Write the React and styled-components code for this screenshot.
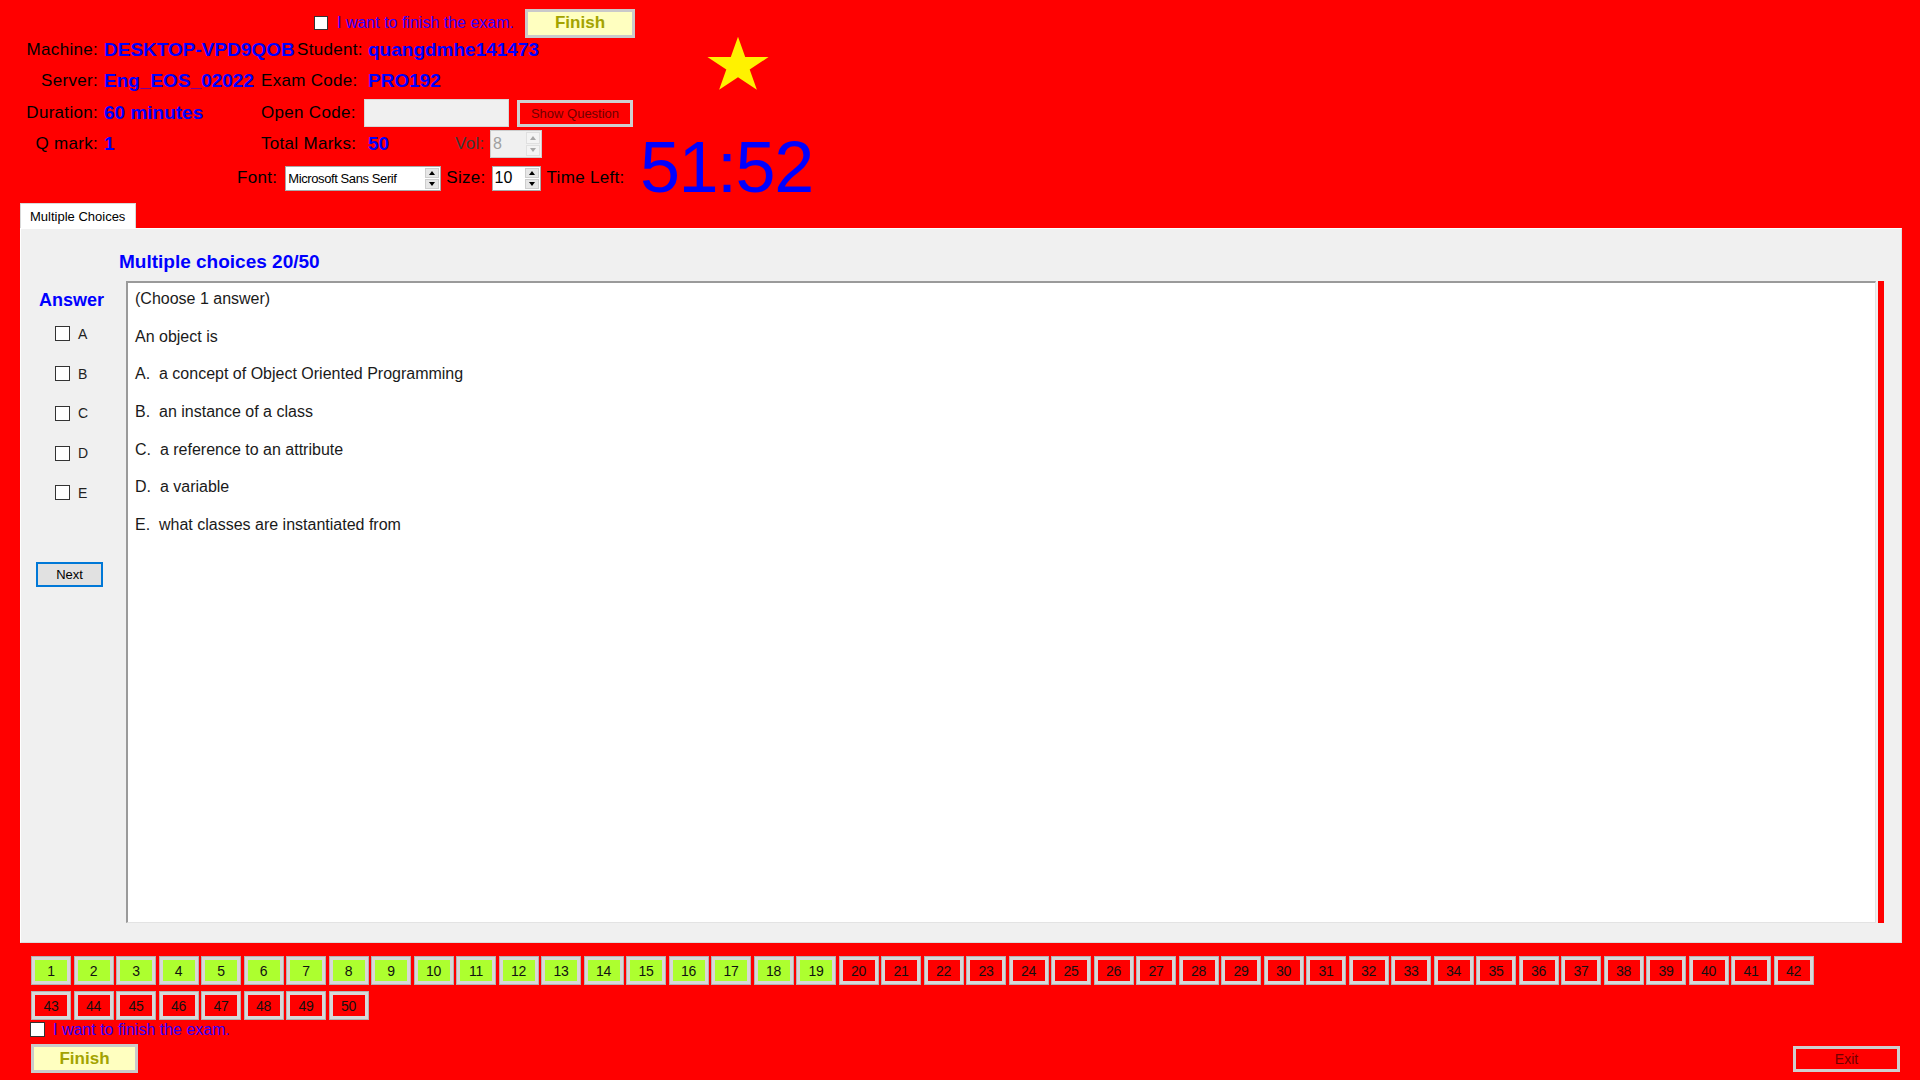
import React from 'react'
import styled, { createGlobalStyle } from 'styled-components'

const GlobalStyle = createGlobalStyle`
  html, body {
    margin: 0;
    padding: 0;
  }
  body {
    background: #ff0000;
    font-family: "Liberation Sans", Arial, sans-serif;
  }
`

const Page = styled.div`
  width: 1920px;
  height: 1080px;
  background: #ff0000;
  overflow: hidden;
`

// ---------- header ----------
const Header = styled.div`
  display: flex;
  height: 203px;
`
const InfoCol = styled.div`
  width: 640px;
  flex: none;
  padding-top: 8px;
  display: flex;
  flex-direction: column;
`
const Row = styled.div`
  display: flex;
  align-items: center;
  height: ${p => p.$h}px;
  padding-left: ${p => p.$pl || 0}px;
`
const Label = styled.span`
  flex: none;
  width: ${p => (p.$w ? p.$w + 'px' : 'auto')};
  margin-left: ${p => p.$ml || 0}px;
  text-align: right;
  white-space: nowrap;
  font-size: 17px;
  letter-spacing: 0.3px;
  color: ${p => (p.$muted ? '#3c3c3c' : '#000')};
`
const Value = styled.span`
  flex: none;
  width: ${p => (p.$w ? p.$w + 'px' : 'auto')};
  margin-left: ${p => p.$ml || 0}px;
  white-space: nowrap;
  font-weight: bold;
  font-size: 19px;
  color: #0000ff;
`
const CheckBox = styled.span`
  flex: none;
  display: inline-block;
  box-sizing: border-box;
  width: ${p => p.$size || 14}px;
  height: ${p => p.$size || 14}px;
  border: 1px solid #333;
  background: #fff;
`
const Hint = styled.span`
  flex: none;
  width: ${p => (p.$w ? p.$w + 'px' : 'auto')};
  margin-left: ${p => p.$ml || 0}px;
  font-size: 16px;
  color: #3000ff;
  white-space: nowrap;
`
const FinishButton = styled.div`
  flex: none;
  box-sizing: border-box;
  width: ${p => p.$w || 110}px;
  height: 29px;
  border: 3px solid #cacaca;
  background: #ffffc0;
  display: flex;
  align-items: center;
  justify-content: center;
  font-weight: bold;
  font-size: 17px;
  color: #a3a300;
`
const CodeInput = styled.div`
  flex: none;
  box-sizing: border-box;
  margin-left: 11px;
  width: 145px;
  height: 28px;
  background: #f0f0f0;
  border: 1px solid #d8d8d8;
`
const RedButton = styled.div`
  flex: none;
  box-sizing: border-box;
  margin-left: ${p => p.$ml || 0}px;
  width: ${p => p.$w}px;
  height: ${p => p.$h}px;
  border: 3px solid #cfcfcf;
  background: #ff0000;
  display: flex;
  align-items: center;
  justify-content: center;
  font-size: ${p => p.$fs || 13}px;
  color: #700000;
`
const Spin = styled.div`
  flex: none;
  display: flex;
  box-sizing: border-box;
  margin-left: ${p => p.$ml || 0}px;
  width: ${p => p.$w}px;
  height: ${p => p.$h}px;
  border: 1px solid ${p => (p.$disabled ? '#cccccc' : '#a9a9a9')};
  background: ${p => (p.$disabled ? '#f0f0f0' : '#fff')};
`
const SpinText = styled.span`
  flex: 1;
  padding-left: 2px;
  display: flex;
  align-items: center;
  white-space: nowrap;
  overflow: hidden;
  font-size: ${p => p.$fs}px;
  letter-spacing: ${p => p.$ls || 0}px;
  color: ${p => (p.$disabled ? '#a0a0a0' : '#000')};
`
const SpinArrows = styled.div`
  width: 16px;
  display: flex;
  flex-direction: column;
  padding: 1px;
  gap: 1px;
  box-sizing: border-box;
`
const SpinArrow = styled.div`
  flex: 1;
  display: flex;
  align-items: center;
  justify-content: center;
  background: ${p => (p.$disabled ? '#f4f4f4' : '#e6e6e6')};
  border: 1px solid ${p => (p.$disabled ? '#e0e0e0' : '#cdcdcd')};
  &::after {
    content: '';
    border-left: 3px solid transparent;
    border-right: 3px solid transparent;
    ${p => (p.$down ? 'border-top' : 'border-bottom')}: 4px solid ${p => (p.$disabled ? '#a8a8a8' : '#000')};
  }
`

const Spinner = ({ value, disabled, fs, ls, ...rest }) => (
  <Spin $disabled={disabled} {...rest}>
    <SpinText $fs={fs} $ls={ls} $disabled={disabled}>{value}</SpinText>
    <SpinArrows>
      <SpinArrow $disabled={disabled} />
      <SpinArrow $disabled={disabled} $down />
    </SpinArrows>
  </Spin>
)

const RightCol = styled.div`
  display: flex;
  flex-direction: column;
`
const StarBox = styled.svg`
  margin: 36px 0 0 58px;
  display: block;
`
const Timer = styled.div`
  margin-top: 40px;
  font-size: 72px;
  line-height: 72px;
  letter-spacing: -1.5px;
  color: #0000ff;
`

// ---------- tab panel ----------
const TabStrip = styled.div`
  display: flex;
  padding-left: 20px;
  height: 25px;
`
const Tab = styled.div`
  box-sizing: border-box;
  width: 116px;
  height: 25px;
  background: #fff;
  border: 1px solid #d9d9d9;
  border-bottom: none;
  padding-left: 9px;
  font-size: 13px;
  line-height: 25px;
  color: #000;
`
const Panel = styled.div`
  box-sizing: border-box;
  margin-left: 20px;
  width: 1882px;
  height: 715px;
  background: #f0f0f0;
  border: 1px solid #fff;
  border-right-color: #dcdcdc;
  border-bottom-color: #dcdcdc;
  padding: 0 17px 19px 0;
  display: grid;
  grid-template-columns: 105px 1fr 8px;
  grid-template-rows: 52px 1fr;
`
const Heading = styled.div`
  grid-column: 1 / -1;
  padding: 22px 0 0 98px;
  font-size: 19px;
  line-height: 22px;
  font-weight: bold;
  color: #0000ff;
`
const AnswerCol = styled.div`
  display: flex;
  flex-direction: column;
`
const AnswerTitle = styled.div`
  margin: 8px 0 0 18px;
  font-size: 18px;
  line-height: 22px;
  font-weight: bold;
  color: #0000ff;
`
const OptionList = styled.div`
  margin-top: 3px;
  padding-left: 34px;
`
const Option = styled.label`
  display: flex;
  align-items: center;
  gap: 8px;
  height: 39.75px;
  font-size: 14px;
  color: #222;
`
const NextButton = styled.div`
  box-sizing: border-box;
  margin: 49px 0 0 15px;
  width: 67px;
  height: 25px;
  border: 2px solid #0078d7;
  background: #e1e1e1;
  display: flex;
  align-items: center;
  justify-content: center;
  font-size: 13px;
  color: #000;
`
const QuestionBox = styled.div`
  background: #fff;
  border-top: 2px solid #9a9a9a;
  border-left: 2px solid #9a9a9a;
  border-right: 1px solid #e3e3e3;
  border-bottom: 1px solid #e3e3e3;
  padding: 4px 0 0 7px;
`
const Line = styled.div`
  font-size: 16px;
  line-height: 24px;
  margin-bottom: 13.67px;
  color: #1a1a1a;
  white-space: pre;
`
const RedStrip = styled.div`
  margin-left: 2px;
  background: #ff0000;
`

// ---------- footer ----------
const NumGrid = styled.div`
  margin-top: 14px;
  padding-left: 32px;
  display: grid;
  grid-template-columns: repeat(42, 38px);
  column-gap: 4.5px;
  row-gap: 8px;
`
const NumButton = styled.div`
  box-sizing: border-box;
  height: 27px;
  border: 3px solid #d8d8d8;
  outline: 1px solid #b4b4b4;
  background: ${p => (p.$done ? '#adff2f' : '#ff0000')};
  display: flex;
  align-items: center;
  justify-content: center;
  font-size: 14px;
  letter-spacing: -0.3px;
  color: #111;
`
const ConfirmRow = styled.div`
  display: flex;
  align-items: center;
  gap: 8px;
  margin-top: 3px;
  padding-left: 30px;
  height: 15px;
`
const FooterBar = styled.div`
  display: flex;
  align-items: center;
  justify-content: space-between;
  margin-top: 7px;
  padding: 0 20px 0 31px;
  height: 29px;
`

const options = ['A', 'B', 'C', 'D', 'E']
const lines = [
  '(Choose 1 answer)',
  'An object is',
  'A.  a concept of Object Oriented Programming',
  'B.  an instance of a class',
  'C.  a reference to an attribute',
  'D.  a variable',
  'E.  what classes are instantiated from',
]
const numbers = Array.from({ length: 50 }, (_, i) => i + 1)

export default function App() {
  return (
    <Page>
      <GlobalStyle />
      <Header>
        <InfoCol>
          <Row $h={30} $pl={314}>
            <CheckBox />
            <Hint $ml={9} $w={188}>I want to finish the exam.</Hint>
            <FinishButton>Finish</FinishButton>
          </Row>
          <Row $h={24}>
            <Label $w={98}>Machine:</Label>
            <Value $ml={6} $w={193}>DESKTOP-VPD9QOB</Value>
            <Label $w={64}>Student:</Label>
            <Value $ml={7}>quangdmhe141473</Value>
          </Row>
          <Row $h={37}>
            <Label $w={98}>Server:</Label>
            <Value $ml={6} $w={157}>Eng_EOS_02022</Value>
            <Label $w={92}>Exam Code:</Label>
            <Value $ml={15}>PRO192</Value>
          </Row>
          <Row $h={28}>
            <Label $w={98}>Duration:</Label>
            <Value $ml={6} $w={157}>60 minutes</Value>
            <Label $w={92}>Open Code:</Label>
            <CodeInput />
            <RedButton $ml={8} $w={116} $h={27}>Show Question</RedButton>
          </Row>
          <Row $h={34}>
            <Label $w={98}>Q mark:</Label>
            <Value $ml={6} $w={157}>1</Value>
            <Label $w={92}>Total Marks:</Label>
            <Value $ml={15} $w={87}>50</Value>
            <Label $w={28} $muted>Vol:</Label>
            <Spinner $ml={7} $w={52} $h={28} value="8" fs={16} disabled />
          </Row>
          <Row $h={34} $pl={237}>
            <Label>Font:</Label>
            <Spinner $ml={8} $w={156} $h={25} value="Microsoft Sans Serif" fs={13} ls={-0.4} />
            <Label $ml={5}>Size:</Label>
            <Spinner $ml={6} $w={49} $h={25} value="10" fs={16} />
            <Label $ml={6}>Time Left:</Label>
          </Row>
        </InfoCol>
        <RightCol>
          <StarBox width="80" height="64" viewBox="0 0 80 64">
            <polygon
              fill="#fff200"
              points="40,1 48.4,24.48 75.57,24.49 53.6,39.02 61.98,62.51 40,48 18.02,62.51 26.4,39.02 4.43,24.49 31.6,24.48"
            />
          </StarBox>
          <Timer>51:52</Timer>
        </RightCol>
      </Header>

      <TabStrip>
        <Tab>Multiple Choices</Tab>
      </TabStrip>
      <Panel>
        <Heading>Multiple choices 20/50</Heading>
        <AnswerCol>
          <AnswerTitle>Answer</AnswerTitle>
          <OptionList>
            {options.map(o => (
              <Option key={o}>
                <CheckBox $size={15} />
                {o}
              </Option>
            ))}
          </OptionList>
          <NextButton>Next</NextButton>
        </AnswerCol>
        <QuestionBox>
          {lines.map(l => (
            <Line key={l}>{l}</Line>
          ))}
        </QuestionBox>
        <RedStrip />
      </Panel>

      <NumGrid>
        {numbers.map(n => (
          <NumButton key={n} $done={n < 20}>{n}</NumButton>
        ))}
      </NumGrid>
      <ConfirmRow>
        <CheckBox $size={15} />
        <Hint>I want to finish the exam.</Hint>
      </ConfirmRow>
      <FooterBar>
        <FinishButton $w={107}>Finish</FinishButton>
        <RedButton $w={107} $h={26} $fs={14}>Exit</RedButton>
      </FooterBar>
    </Page>
  )
}
